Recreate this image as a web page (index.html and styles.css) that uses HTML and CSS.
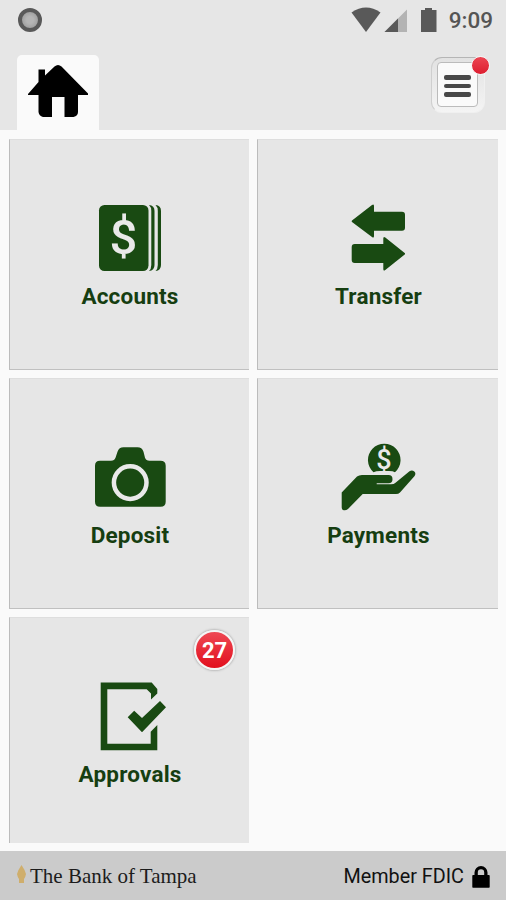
FILE: index.html
```html
<!DOCTYPE html>
<html lang="en">
<head>
    <meta charset="UTF-8">
    <meta name="viewport" content="width=device-width, initial-scale=1.0">
    <link rel="stylesheet" href="styles.css">
    <title>The Bank of Tampa</title>
</head>
<body>
    <!-- Status bar -->
    <div class="status-bar">
        <span class="recorder"></span>
        <svg class="status-icons" width="90" height="28" viewBox="0 0 90 28">
            <path d="M1.500 8.500Q16-1.500 30.500 8.500L16 28z"/>
            <path d="M57 5.500v23H34z" fill="#b3b3b3"/>
            <path d="M48 14.500v14H34z"/>
            <path d="M72 6h3V4h7v2h4.500v22H71V6z"/>
        </svg>
        <span class="clock">9:09</span>
    </div>

    <!-- Tabs -->
    <header>
        <a href="#" class="home-tab">
            <svg width="60" height="54" viewBox="0 0 60 54">
                <path d="M0 30L10.500 18V5.500h6.500v6L26.500 2.500Q30-.5 33.500 2.500L60 29.500V31H50v17q0 4-4.500 5H36.500V33H24v20H15q-4-1-4.500-5V31H0z"/>
            </svg>
        </a>
        <button class="menu-btn">
            <span class="menu-face"><i></i><i></i><i></i></span>
            <span class="dot"></span>
        </button>
    </header>

    <!-- Main menu -->
    <main class="tiles">
        <a href="#" class="tile">
            <svg width="80" height="72" viewBox="0 0 80 72">
                <rect x="9" y="3" width="49.500" height="66" rx="5.500"/>
                <path d="M59 3q5.500 .5 5.500 6v54q0 5.500-5.500 6q2.300-2 2.300-6V9q0-4-2.300-6z"/>
                <path d="M65.500 3q5.500 .5 5.500 6v54q0 5.500-5.500 6q2.300-2 2.300-6V9q0-4-2.300-6z"/>
                <text x="33.500" y="52" class="dollar">$</text>
            </svg>
            <span class="label">Accounts</span>
        </a>
        <a href="#" class="tile">
            <svg width="80" height="72" viewBox="0 0 80 72">
                <path d="M14 18.500L34 3q2-1.500 2 1v5.700h28q3 0 3 3v13q0 3-3 3H36V34q0 2.500-2 1L14 20q-.8-.8 0-1.500z"/>
                <path d="M66.700 51L47.300 35.500q-2-1.500-2 1V42H16.700q-3 0-3 3v13q0 3 3 3h28.600v6q0 2.500 2 1l19.400-15.500q.8-.8 0-1.500z"/>
            </svg>
            <span class="label">Transfer</span>
        </a>
        <a href="#" class="tile">
            <svg width="80" height="72" viewBox="0 0 80 72">
                <path d="M10 19.700h11q3.500 0 4.500-3l2-6q1.500-4.400 6-4.400h14q4.500 0 6 4.400l1.500 6q1 3 4.500 3h11q5.200 0 5.200 5v36q0 5-5.200 5H10q-5 0-5-5v-36q0-5 5-5z"/>
                <circle class="lens" cx="40.200" cy="41.600" r="16.300"/>
            </svg>
            <span class="label">Deposit</span>
        </a>
        <a href="#" class="tile">
            <svg width="80" height="72" viewBox="0 0 80 72">
                <path d="M35.500 31.300A16.300 16.300 0 1 1 57 31.300Q55 30 51 30H42q-4 0-6.500 1.300z"/>
                <text x="46" y="28" class="dollar coin">$</text>
                <path d="M3.700 51.500L19 35.500Q21 34 24 34h26.500q4 0 4 4.200q0 4.100-4 4.100H38.700v1H53q3 0 4.500-1.600L71.500 30.200q2.500-1.700 4.800.3q2 2 .3 4.600L62 51.500Q60.500 53 58 53H24.700L10 68q-2.500 2-5 1q-1.300-.7-1.300-2.500z"/>
            </svg>
            <span class="label">Payments</span>
        </a>
        <a href="#" class="tile">
            <span class="badge">27</span>
            <svg width="80" height="72" viewBox="0 0 80 72">
                <path d="M10.700 2.500h51l5.600 6.500v4.500l-6.300 6V13.500l-4.300-4.200H17.300v54.400h43.400v-12l6.600-6.700v25.300H10.700z"/>
                <path d="M37.700 37.300l6.500-6.600l7.800 7.300l18-17l6 6.300l-24 25z"/>
            </svg>
            <span class="label">Approvals</span>
        </a>
    </main>

    <footer>
        <div class="brand">
            <svg width="11" height="20" viewBox="0 0 11 20">
                <path d="M5.500 0Q9 5 10 9Q9.500 12 8 14V18H3V14Q1.500 12 1 9Q2 5 5.500 0z"/>
            </svg>
            <span>The Bank of Tampa</span>
        </div>
        <div class="member">
            <span>Member FDIC</span>
            <svg width="18" height="23" viewBox="0 0 18 23">
                <path d="M1 10h1.500V7.500a6.500 6.500 0 0 1 13 0V10H17q.7 0 .7 1v11q0 .8-.7.800H1q-.7 0-.7-.8V11q0-1 .7-1zM5.800 10h6.400V7.500a3.200 3.200 0 0 0-6.400 0z"/>
            </svg>
        </div>
    </footer>
</body>
</html>
```
FILE: styles.css
```css
* {
    box-sizing: border-box;
}
body {
    font-family: Roboto, "Liberation Sans", sans-serif;
    margin: 0;
    height: 900px;
    background: #fafafa;
    display: flex;
    flex-direction: column;
    overflow: hidden;
}
a {
    text-decoration: none;
}
svg {
    display: block;
    flex: none;
}

.status-bar {
    height: 41px;
    padding: 0 13px 1px 18px;
    background: #e6e6e6;
    display: flex;
    align-items: center;
}
.recorder {
    width: 24px;
    height: 24px;
    border: 4px solid #595959;
    border-radius: 50%;
    background: radial-gradient(#b5b5b5 30%, #929292);
}
.status-icons {
    margin-left: auto;
    margin-bottom: 4px;
    fill: #595959;
}
.clock {
    margin-left: 9px;
    color: #555;
    font-size: 22.500px;
    font-weight: 500;
    line-height: 42px;
}

header {
    height: 89px;
    padding: 14px 21px 0 17px;
    background: #e6e6e6;
    display: flex;
    justify-content: space-between;
}
.home-tab {
    width: 82px;
    height: 75px;
    padding: 9px 0 0 11px;
    background: #fafafa;
    border-radius: 5px 5px 0 0;
}
.menu-btn {
    position: relative;
    width: 54px;
    height: 56px;
    margin-top: 2px;
    padding: 4px 6px 5px 5px;
    border: 1px solid #f0f0f0;
    border-top-color: #b5b5b5;
    border-left-color: #cfcfcf;
    border-radius: 11px;
    background: linear-gradient(#e2e2e2, #f4f4f4);
}
.menu-face {
    height: 100%;
    padding-top: 3px;
    border: 1px solid #bbb;
    border-radius: 4px;
    background: #fafafa;
    display: flex;
    flex-direction: column;
    align-items: center;
    justify-content: center;
    gap: 4px;
}
.menu-face i {
    width: 27px;
    height: 4.500px;
    border-radius: 2px;
    background: #484848;
}
.dot {
    position: absolute;
    top: -2px;
    right: -6px;
    width: 19px;
    height: 19px;
    border: 1.500px solid #f6f6f6;
    border-radius: 50%;
    background: linear-gradient(#ec4552, #dd1e30);
}

.tiles {
    height: 721px;
    padding: 9px 8px 8px 9px;
    display: grid;
    grid-template-columns: 240px 241px;
    grid-template-rows: 231px 231px 226px;
    gap: 8px;
}
.tile {
    position: relative;
    padding: 62px 0 0 1px;
    border-top: 1px solid #dedede;
    border-left: 1px solid #bcbcbc;
    border-bottom: 1px solid #c0c0c0;
    background: #e6e6e6;
    color: #163e11;
    display: flex;
    flex-direction: column;
    align-items: center;
}
.tile:last-child {
    border-bottom: none;
}
.tile svg {
    fill: #194a12;
}
.tile:nth-child(even) svg {
    margin-right: 2px;
}
.tile .dollar {
    fill: #e9e9e9;
    font-size: 49px;
    font-weight: 500;
    text-anchor: middle;
}
.tile .coin {
    font-size: 27px;
}
.tile .lens {
    stroke: #e9e9e9;
    stroke-width: 4.500px;
}
.label {
    margin-top: 8px;
    font-size: 22.500px;
    font-weight: 700;
    letter-spacing: 0.2px;
    line-height: 28px;
}
.badge {
    position: absolute;
    top: 12px;
    right: 14px;
    width: 41px;
    height: 40px;
    border: 2px solid #f5f5f5;
    border-radius: 50%;
    background: linear-gradient(#ee4853, #e20f1d);
    box-shadow: 0 0 2px 1px #bbb;
    color: #fff;
    font-size: 22px;
    font-weight: 700;
    line-height: 37px;
    text-align: center;
}

footer {
    height: 49px;
    padding: 1px 16px 0;
    background: #cbcbcb;
    display: flex;
    align-items: center;
    justify-content: space-between;
}
.brand {
    display: flex;
    align-items: center;
    gap: 3px;
    color: #1c1c1c;
    font-family: "Liberation Serif", serif;
    font-size: 21px;
}
.brand svg {
    fill: #cfae6c;
    margin-bottom: 2px;
}
.member {
    display: flex;
    align-items: center;
    gap: 8px;
    color: #111;
    font-size: 19.800px;
}
```
